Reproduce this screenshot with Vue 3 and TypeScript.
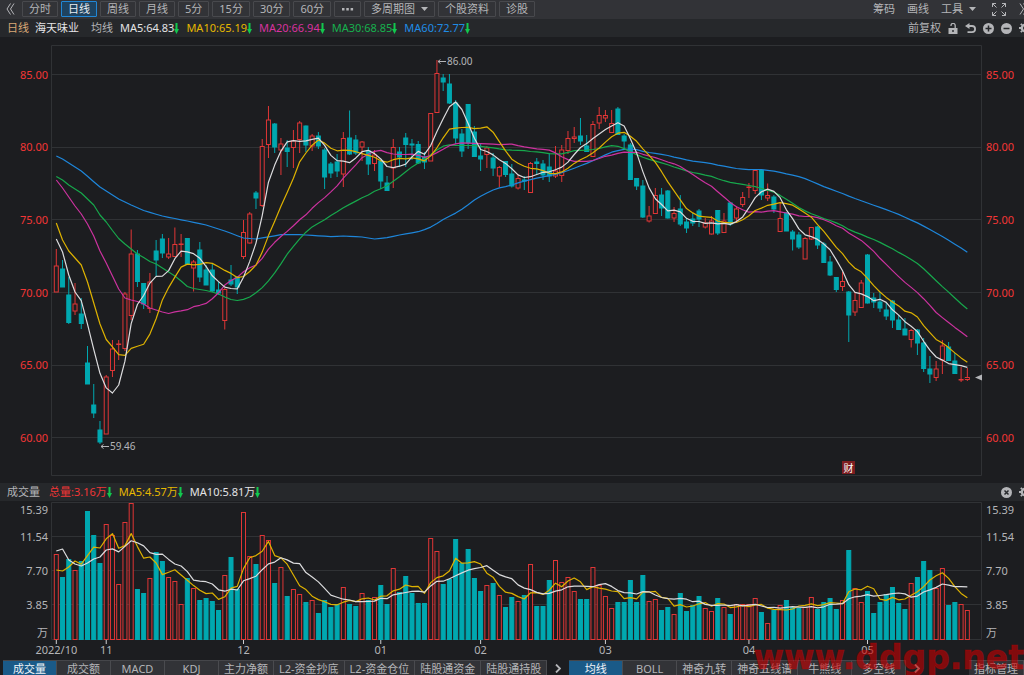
<script setup lang="ts">
import { ref } from 'vue'

type Candle = { up: boolean; high: number; top: number; bottom: number; low: number; vol: number }

// Each record: direction (r = rise, f = fall), high, body top, body bottom, low, volume top.
const RAW = `r 249 266 292 292 554;f 260 269 287 287 577;f 277 295 322.5 324 559;r 283 304 311 315 570;f 298 314 323.5 329 561
f 346 363 384 384 511;f 384 405 413 418 535;f 421 430 442 444 563;r 375 377 434 434 524;r 340 349 370.5 377 535
r 340 344 344.5 360 584;r 292 294 348.5 351 522;r 229.5 254 315.5 320 503;f 250 254 281.5 287 589;f 283 283.5 304 309 593
r 273 282 308.5 313 578;f 240 251 260 276 552;f 234 239 253 258 561;r 238 254 257 259 577;r 227.5 244.5 256.5 257 581
r 234 244 244.5 257 604;f 238 238.5 264 264 578;r 260 262 268 291.5 588;f 242 250 277 282 600;f 265 270 285 285 598
f 264 270 291 292 601;f 282 290 293 295 610;r 288 289.5 320.5 329.5 575;f 265 280 284 286 557;f 276 277 287 294 589
r 220 232.5 256.5 259 512;r 212 214 243 243.5 556;f 191 193 198 209 564;r 139 146.5 205.5 207 535;r 106 120 144.5 158 540
f 123 124 147 153 583;r 138 144 150 175 567;f 140 148 151.5 167 596;r 130 141 147.5 168 589;r 121 123 139.5 153 594
f 125.5 126 145 152 602;r 134 136 146 151 600;f 132 136 146 149 613;f 148 150 177 189 600;f 162 164 173 178 607
f 154 162 171 177 604;r 132 138.5 174 187 587;f 110.5 138 154 155 604;f 135 140 153 155 606;r 141 142 147 161 593
f 147 151 164 175 600;r 150 155 163.5 171 597;f 160 161 181 189 585;f 176 183 190.5 191 604;r 139 147.5 168 188 568
f 147 152 157 167 592;f 133 138 144.5 167 576;f 139 144 145 160 593;f 141 144.5 163 164 603;f 152 157 162 169 603
r 113.5 113.5 161 161 538;r 60 73.5 112.5 112.5 551;f 74 78 82 91 584;f 74 84 103 104 579;f 100 103 138 144 539
f 129 134 151 157 563;f 104 104.5 143 149 549;f 126 132 156.5 157 578;f 144 156 159 171 591;r 146 148 154.5 168 585
f 153 158 168 176 583;r 166 167.5 176 187 595;f 161 161.5 174.5 177 607;f 164 174 186 187.5 597;r 175 178.5 188 189.5 601
f 176 180 181 190 595;r 162 163.5 192.5 192.5 564;f 158 162 163.5 174 606;f 160 164 175 180 606;f 153 167 176 182 580
r 146 171 176 178 560;r 145 150 175.5 182 582;r 131 138.5 150.5 154 577;r 127 137 138.5 143 591;f 118 136 141 145 599
f 135 146 151.5 152 599;r 121 124.5 156.5 156.5 567;r 107 115.5 123 129 585;r 110 115.5 118 122 596;r 110 123.5 132.5 132.5 608
f 107 109 134.5 135 602;f 134 136 141 149 602;f 143 145 179.5 180 580;f 178 178.5 186 190 602;f 180 186 217 218 575
r 206 216 221 222.5 601;r 188 195.5 213.5 213.5 599;f 188 195 208 216 610;f 190 191 218 218.5 607;r 207 213.5 218 222 614
f 195 209 224 226 593;f 218 222 228 233 611;f 213 219 223 226 605;f 209 211 219 227 596;r 218 223 227 228.5 608
r 216 221 234 234.5 611;f 210 210.5 233 235 598;r 213 221 232.5 232.5 607;f 202 203 224 226 614;r 206 209 218 222 604
r 192 197.5 204.5 207 604;r 183 187 187.5 198 604;r 170 170.5 190.5 194 598;f 170 170.5 195 200 612;r 183.5 195.5 198 201 623
f 195 197 209 213 610;r 203 218.5 231.5 231.5 605;f 212 213 231 231 600;f 230 232 239 250.5 607;f 232 235 247 249 608
r 237 238.5 259 259 607;r 227 227.5 239 240 597;f 226 227 245 249 609;f 242 244 262.5 262.5 602;f 256 262 275 276 598
f 277 277.5 289.5 292 609;r 272 281.5 286.5 291 600;f 291 292 315 342 550;r 292 300.5 312 316 588;r 280 283 307.5 307.5 602
f 254 255 303 303.5 591;f 293 298 302 308 613;f 292 302 308 312 602;f 303 310 316 320 594;f 300 301 320 328 587
f 315 320 329.5 329.5 603;f 318 329 335 335 609;r 329 330.5 339.5 347.5 583;f 329 330 343 355 577;f 338 343 368.5 372 561
f 356 369 374 383 570;r 361 369 377.5 381 588;r 340 346 360 374 568;f 342 347 360.5 361 605;f 353 361 373.5 374 602
r 367 379.5 380 382 604;r 368 377.5 379.5 381 610`

const candles: Candle[] = RAW.split(/[;\n]/).map((row) => {
  const [kind, high, top, bottom, low, vol] = row.trim().split(' ')
  return { up: kind === 'r', high: +high, top: +top, bottom: +bottom, low: +low, vol: +vol }
})

const x = (i: number): number => Math.round((56.3 + i * 6.24) * 100) / 100
const closes = candles.map((c) => (c.up ? c.top : c.bottom))
const volumes = candles.map((c) => c.vol)

// Moving average; `lead` supplies the values that depend on bars before the visible range.
function average(values: number[], n: number, lead: number[]): string {
  return values
    .map((_, i) => {
      const y = i < n - 1 ? lead[i] : values.slice(i - n + 1, i + 1).reduce((a, b) => a + b, 0) / n
      return `${x(i)},${y.toFixed(1)}`
    })
    .join(' ')
}

// Fills in values between sparse [index, value] anchors.
function between(anchors: [number, number][]): number[] {
  const out: number[] = []
  for (let k = 0; k < anchors.length - 1; k++) {
    const [a, va] = anchors[k]
    const [b, vb] = anchors[k + 1]
    for (let i = a; i < b; i++) out.push(va + ((vb - va) * (i - a)) / (b - a))
  }
  out.push(anchors[anchors.length - 1][1])
  return out
}

const priceLines = [
  { cls: 'blue', pts: average(closes, 60, between([[0, 156], [1, 159], [4, 171], [7, 187], [10, 199], [12, 205], [14, 210.5], [17, 216], [21, 221], [24, 225], [27, 231], [30, 238], [32, 239], [36, 234.7], [39, 234.7], [41, 235.3], [44, 236.7], [46, 236], [49, 237], [51, 239], [53, 237.7], [55, 235], [58, 231.7]])) },
  { cls: 'green', pts: average(closes, 30, [176.5, 180, 185, 189, 193, 199, 205, 215, 222, 230.5, 238.5, 244, 249, 254, 257.5, 261.5, 264, 268, 272, 276, 281, 286.5, 288.5, 289.5, 290.5, 292, 294, 297, 299.5]) },
  { cls: 'pink', pts: average(closes, 20, [180, 188, 197, 206, 214, 224, 236, 251, 263, 276, 289, 298, 300, 301.5, 304, 308, 310, 312, 313.5]) },
  { cls: 'yellow', pts: average(closes, 10, [223, 240, 251, 258, 265, 282, 303, 324, 339.5]) },
  { cls: 'white', pts: average(closes, 5, [239, 252, 275, 292]) },
]
const volumeLines = [
  { cls: 'yellow', pts: average(volumes, 5, [570, 571, 567, 561]) },
  { cls: 'white', pts: average(volumes, 10, [551, 549, 560, 564, 566, 563, 559, 557, 550]) },
]

const prices = [
  { y: 74.5, t: '85.00' }, { y: 147, t: '80.00' }, { y: 219.5, t: '75.00' },
  { y: 292.5, t: '70.00' }, { y: 365, t: '65.00' }, { y: 437.5, t: '60.00' },
]
const amounts = [
  { y: 514, t: '15.39' }, { y: 541, t: '11.54' }, { y: 575, t: '7.70' }, { y: 609, t: '3.85' }, { y: 637, t: '万' },
]
const months = [
  { i: 0, t: '2022/10' }, { i: 8, t: '11' }, { i: 30, t: '12' }, { i: 52, t: '01' },
  { i: 68, t: '02' }, { i: 88, t: '03' }, { i: 111, t: '04' }, { i: 130, t: '05' },
]

const periods = ['分时', '日线', '周线', '月线', '5分', '15分', '30分', '60分']
const period = ref('日线')
const legend = [
  { t: 'MA5:64.83', cls: 'white' }, { t: 'MA10:65.19', cls: 'yellow' }, { t: 'MA20:66.94', cls: 'pink' },
  { t: 'MA30:68.85', cls: 'green' }, { t: 'MA60:72.77', cls: 'blue' },
]
const volumeLegend = [
  { t: '总量:3.16万', cls: 'red' }, { t: 'MA5:4.57万', cls: 'yellow' }, { t: 'MA10:5.81万', cls: 'white' },
]
const lowerTabs = ['成交量', '成交额', 'MACD', 'KDJ', '主力净额', 'L2-资金抄底', 'L2-资金仓位', '陆股通资金', '陆股通持股']
const upperTabs = ['均线', 'BOLL', '神奇九转', '神奇五线谱', '牛熊线', '多空线']
const lower = ref('成交量')
const upper = ref('均线')
</script>

<template>
  <main class="page">
    <nav class="toolbar">
      <button class="bare" aria-label="收起">
        <svg width="9" height="12" viewBox="0 0 9 12"><path d="M4.500 .5 1 6l3.500 5.500M8 .5 4.500 6 8 11.500" class="ln" /></svg>
      </button>
      <div class="group">
        <button v-for="p in periods" :key="p" class="box" :class="{ on: p === period }" @click="period = p">{{ p }}</button>
        <button class="box" aria-label="更多">
          <svg width="13" height="10" viewBox="0 0 13 10"><path d="M1 4h2.500v2.500H1zM5.300 4h2.500v2.500h-2.500zM9.600 4h2.500v2.500H9.600z" class="fl" /></svg>
        </button>
        <button class="box">多周期图<svg class="caret" width="7" height="4" viewBox="0 0 7 4"><path d="M0 0h7L3.500 4z" class="fl" /></svg></button>
        <button class="box">个股资料</button>
        <button class="box">诊股</button>
      </div>
      <div class="tools">
        <button class="bare">筹码</button>
        <button class="bare">画线</button>
        <button class="bare">工具<svg class="caret" width="7" height="4" viewBox="0 0 7 4"><path d="M0 0h7L3.500 4z" class="fl" /></svg></button>
        <button class="bare expand" aria-label="全屏">
          <svg width="14" height="13" viewBox="0 0 14 13"><path d="M.5 4V.5H4M.5.5l4 4M10 .5h3.500V4M13.500.5l-4 4M.5 9v3.500H4M.5 12.500l4-4M10 12.500h3.500V9M13.500 12.500l-4-4" class="ln" /></svg>
        </button>
        <button class="bare" aria-label="展开">
          <svg width="9" height="12" viewBox="0 0 9 12"><path d="M1 .5 4.500 6 1 11.500M4.500.5 8 6l-3.500 5.500" class="ln" /></svg>
        </button>
      </div>
    </nav>

    <header class="info">
      <span class="tan">日线</span>
      <span class="name">海天味业</span>
      <span class="kind">均线</span>
      <span v-for="l in legend" :key="l.t" class="item" :class="l.cls">{{ l.t }}<svg width="5" height="11" viewBox="0 0 5 11"><path d="M1.500 0h2v6H5L2.500 11 0 6h1.500z" class="down" /></svg></span>
      <div class="icons">
        <button class="bare">前复权</button>
        <button class="bare" aria-label="锁定"><svg width="10" height="11" viewBox="0 0 10 11"><path d="M.5 5h9v6h-9zM4.300 7v2h1.400V7z" class="fl" fill-rule="evenodd" /><path d="M3 3V2.500a2 2 0 0 1 4.200 0V5" class="ln thick" /></svg></button>
        <button class="bare" aria-label="撤销"><svg width="11" height="11" viewBox="0 0 11 11"><path d="M4.500 0v6L0 3z" class="fl" /><path d="M3 3h4a3 3 0 0 1 0 6.200H2.500" class="ln heavy" /></svg></button>
        <button class="bare" aria-label="放大"><svg width="11" height="11" viewBox="0 0 11 11"><circle cx="5.500" cy="5.500" r="5.500" class="fl" /><path d="M5.500 2.500v6M2.500 5.500h6" class="cut" /></svg></button>
        <button class="bare" aria-label="缩小"><svg width="11" height="11" viewBox="0 0 11 11"><circle cx="5.500" cy="5.500" r="5.500" class="fl" /><path d="M2.500 5.500h6" class="cut" /></svg></button>
        <button class="bare" aria-label="设置"><svg width="12" height="12" viewBox="0 0 12 12"><circle cx="6" cy="6" r="3.200" class="ln ring" /><path d="M6 0v2M6 10v2M0 6h2M10 6h2M1.800 1.800l1.400 1.400M8.800 8.800l1.400 1.400M1.800 10.200l1.400-1.400M8.800 3.200l1.400-1.400" class="ln heavy" /></svg></button>
      </div>
    </header>

    <svg class="chart" viewBox="0 37 1024 446" role="img" aria-label="日线价格">
      <path d="M51.500 45.500H981.500V475.500H51.500z" class="frame" />
      <g v-for="p in prices" :key="p.t">
        <path :d="`M52 ${Math.floor(p.y)}.5H981`" class="grid" />
        <text x="48" :y="p.y + 4" class="price" text-anchor="end">{{ p.t }}</text>
        <text x="986" :y="p.y + 4" class="price">{{ p.t }}</text>
      </g>
      <g v-for="(c, i) in candles" :key="i" :class="c.up ? 'rise' : 'fall'">
        <path :d="`M${x(i)} ${c.high}V${c.top}M${x(i)} ${c.bottom}V${c.low}`" class="wick" />
        <rect :x="x(i) - 2" :y="c.top" width="4" :height="c.bottom - c.top" class="body" />
      </g>
      <polyline v-for="l in priceLines" :key="l.cls" :points="l.pts" class="avg" :class="l.cls" />
      <path d="M438 61.500h8M440.500 59.500l-2.500 2 2.500 2M101 446.500h8M103.500 444.500l-2.500 2 2.500 2" class="pointer" />
      <text x="447" y="65" class="note">86.00</text>
      <text x="110" y="450" class="note">59.46</text>
      <path d="M975 377.500l7-3v6z" class="fl" />
      <rect x="842" y="461" width="13" height="13" class="badge" />
      <text x="848.500" y="471.500" class="badge-text" text-anchor="middle">财</text>
    </svg>

    <header class="info">
      <span class="kind first">成交量</span>
      <span v-for="l in volumeLegend" :key="l.t" class="item" :class="l.cls">{{ l.t }}<svg width="5" height="11" viewBox="0 0 5 11"><path d="M1.500 0h2v6H5L2.500 11 0 6h1.500z" class="down" /></svg></span>
      <div class="icons">
        <button class="bare" aria-label="关闭"><svg width="11" height="11" viewBox="0 0 11 11"><circle cx="5.500" cy="5.500" r="5.500" class="fl" /><path d="M3.500 3.500l4 4M7.500 3.500l-4 4" class="cut" /></svg></button>
        <button class="bare" aria-label="设置"><svg width="12" height="12" viewBox="0 0 12 12"><circle cx="6" cy="6" r="3.200" class="ln ring" /><path d="M6 0v2M6 10v2M0 6h2M10 6h2M1.800 1.800l1.400 1.400M8.800 8.800l1.400 1.400M1.800 10.200l1.400-1.400M8.800 3.200l1.400-1.400" class="ln heavy" /></svg></button>
      </div>
    </header>

    <svg class="chart" viewBox="0 501 1024 159" role="img" aria-label="成交量">
      <path d="M51.500 502.500H981.500V639.500H51.500zM52 536.500H981M52 570.500H981M52 604.500H981" class="frame" />
      <g v-for="a in amounts" :key="a.t">
        <text x="48" :y="a.y" class="amount" text-anchor="end">{{ a.t }}</text>
        <text x="986" :y="a.y" class="amount">{{ a.t }}</text>
      </g>
      <g v-for="(c, i) in candles" :key="i" :class="c.up ? 'rise' : 'fall'">
        <rect :x="x(i) - 2" :y="c.vol + 0.5" width="4" :height="639 - c.vol" class="body" />
      </g>
      <polyline v-for="l in volumeLines" :key="l.cls" :points="l.pts" class="avg" :class="l.cls" />
      <g v-for="m in months" :key="m.t">
        <path :d="`M${x(m.i)} 640v4`" class="tick" />
        <text :x="x(m.i)" y="654" class="amount" text-anchor="middle">{{ m.t }}</text>
      </g>
    </svg>

    <footer class="tabs">
      <button v-for="t in lowerTabs" :key="t" class="tab" :class="{ on: t === lower }" @click="lower = t">{{ t }}</button>
      <button class="next" aria-label="更多指标"><svg width="6" height="9" viewBox="0 0 6 9"><path d="M1 .5l4 4-4 4" class="ln heavy" /></svg></button>
      <button v-for="t in upperTabs" :key="t" class="tab" :class="{ on: t === upper }" @click="upper = t">{{ t }}</button>
      <button class="next" aria-label="更多指标"><svg width="6" height="9" viewBox="0 0 6 9"><path d="M1 .5l4 4-4 4" class="ln heavy" /></svg></button>
      <button class="tab manage">指标管理</button>
    </footer>
    <div class="mark">www.ddgp.net</div>
  </main>
</template>

<style>
body { margin: 0; background: #1c1d20; }
</style>

<style scoped>
.page {
  position: relative;
  overflow: hidden;
  background: #1c1d20;
  color: #b4b5b8;
  font: 11px/14px "Noto Sans", "Noto Sans CJK SC", sans-serif;
  white-space: nowrap;
}
button { margin: 0; padding: 0; border: 0; background: none; color: inherit; font: inherit; white-space: nowrap; cursor: pointer; }
svg { flex: none; }
.toolbar { display: flex; align-items: center; height: 18px; padding: 0 0 1px 6px; background: #323337; overflow: hidden; }
.bare { display: inline-flex; align-items: center; height: 14px; }
.group { display: flex; gap: 3px; margin-left: 7px; }
.box { display: flex; align-items: center; height: 16px; padding: 0 6px; border: 1px solid #48494d; border-radius: 1px; }
.box.on { border-color: #2187d6; background: #1f4360; color: #e8edf2; }
.caret { margin: 0 0 0 6px; }
.tools { display: flex; align-items: center; gap: 12px; margin-left: auto; margin-right: -4px; }
.expand { margin: 0 1px 0 4px; }
.ln { fill: none; stroke: #b4b5b8; stroke-width: 1; }
.thick { stroke-width: 1.3; }
.heavy { stroke-width: 1.8; }
.ring { stroke-width: 2.4; }
.fl { fill: #b4b5b8; }
.cut { stroke: #26282b; stroke-width: 1.5; fill: none; }
.down { fill: #12c84e; }

.info { display: flex; align-items: center; height: 18px; padding-left: 7px; background: #26282b; overflow: hidden; }
.tan { color: #d9a877; }
.name { margin-left: 6px; color: #e4e4e6; }
.kind { margin: 0 7px 0 12px; }
.kind.first { margin: 0 9px 0 0; }
.item { display: flex; align-items: center; margin-right: 7px; }
.item.white { color: #e4e4e6; }
.item.yellow { color: #e6b800; }
.item.pink { color: #d8329f; }
.item.green { color: #17b04e; }
.item.blue { color: #1f8ce6; }
.item.red { color: #f03636; }
.icons { display: flex; align-items: center; gap: 7px; margin-left: auto; margin-right: -7px; }

.chart { display: block; width: 100%; height: auto; }
.frame, .grid { fill: none; stroke: #303235; }
.price { fill: #f23636; }
.amount { fill: #b4b5b8; }
.note { fill: #b4b5b8; font-size: 10px; }
.wick, .body { stroke-width: 1; }
.rise .wick { stroke: #e03636; }
.rise .body { stroke: #e03636; fill: #1c1d20; }
.fall .wick { stroke: #00a8b0; }
.fall .body { stroke: #00a8b0; fill: #00a8b0; }
.avg { fill: none; stroke-width: 1.2; stroke-linejoin: round; }
.avg.white { stroke: #dcdcde; }
.avg.yellow { stroke: #deb200; }
.avg.pink { stroke: #cc329f; }
.avg.green { stroke: #17a84c; }
.avg.blue { stroke: #1e86da; }
.pointer { fill: none; stroke: #b4b5b8; }
.tick { stroke: #d0d0d2; }
.badge { fill: #7d1d20; }
.badge-text { fill: #fff; font-size: 10px; }

.tabs { display: flex; height: 15px; padding-left: 3px; overflow: hidden; }
.tab { min-width: 54px; height: 16px; padding: 0 5px; border-top: 1px solid #45464a; border-right: 1px solid #4a4b4f; background: #323337; }
.tab.on { background: #1a5a88; color: #f0f4f8; }
.next { display: flex; align-items: center; justify-content: center; width: 22px; height: 16px; }
.manage { margin-left: auto; }
.mark {
  position: absolute;
  right: 0;
  bottom: 2px;
  color: rgba(200, 0, 0, 0.6);
  font: bold 33px/30px "DejaVu Sans", sans-serif;
  -webkit-text-stroke: 1px rgba(200, 0, 0, 0.3);
  pointer-events: none;
}
</style>
